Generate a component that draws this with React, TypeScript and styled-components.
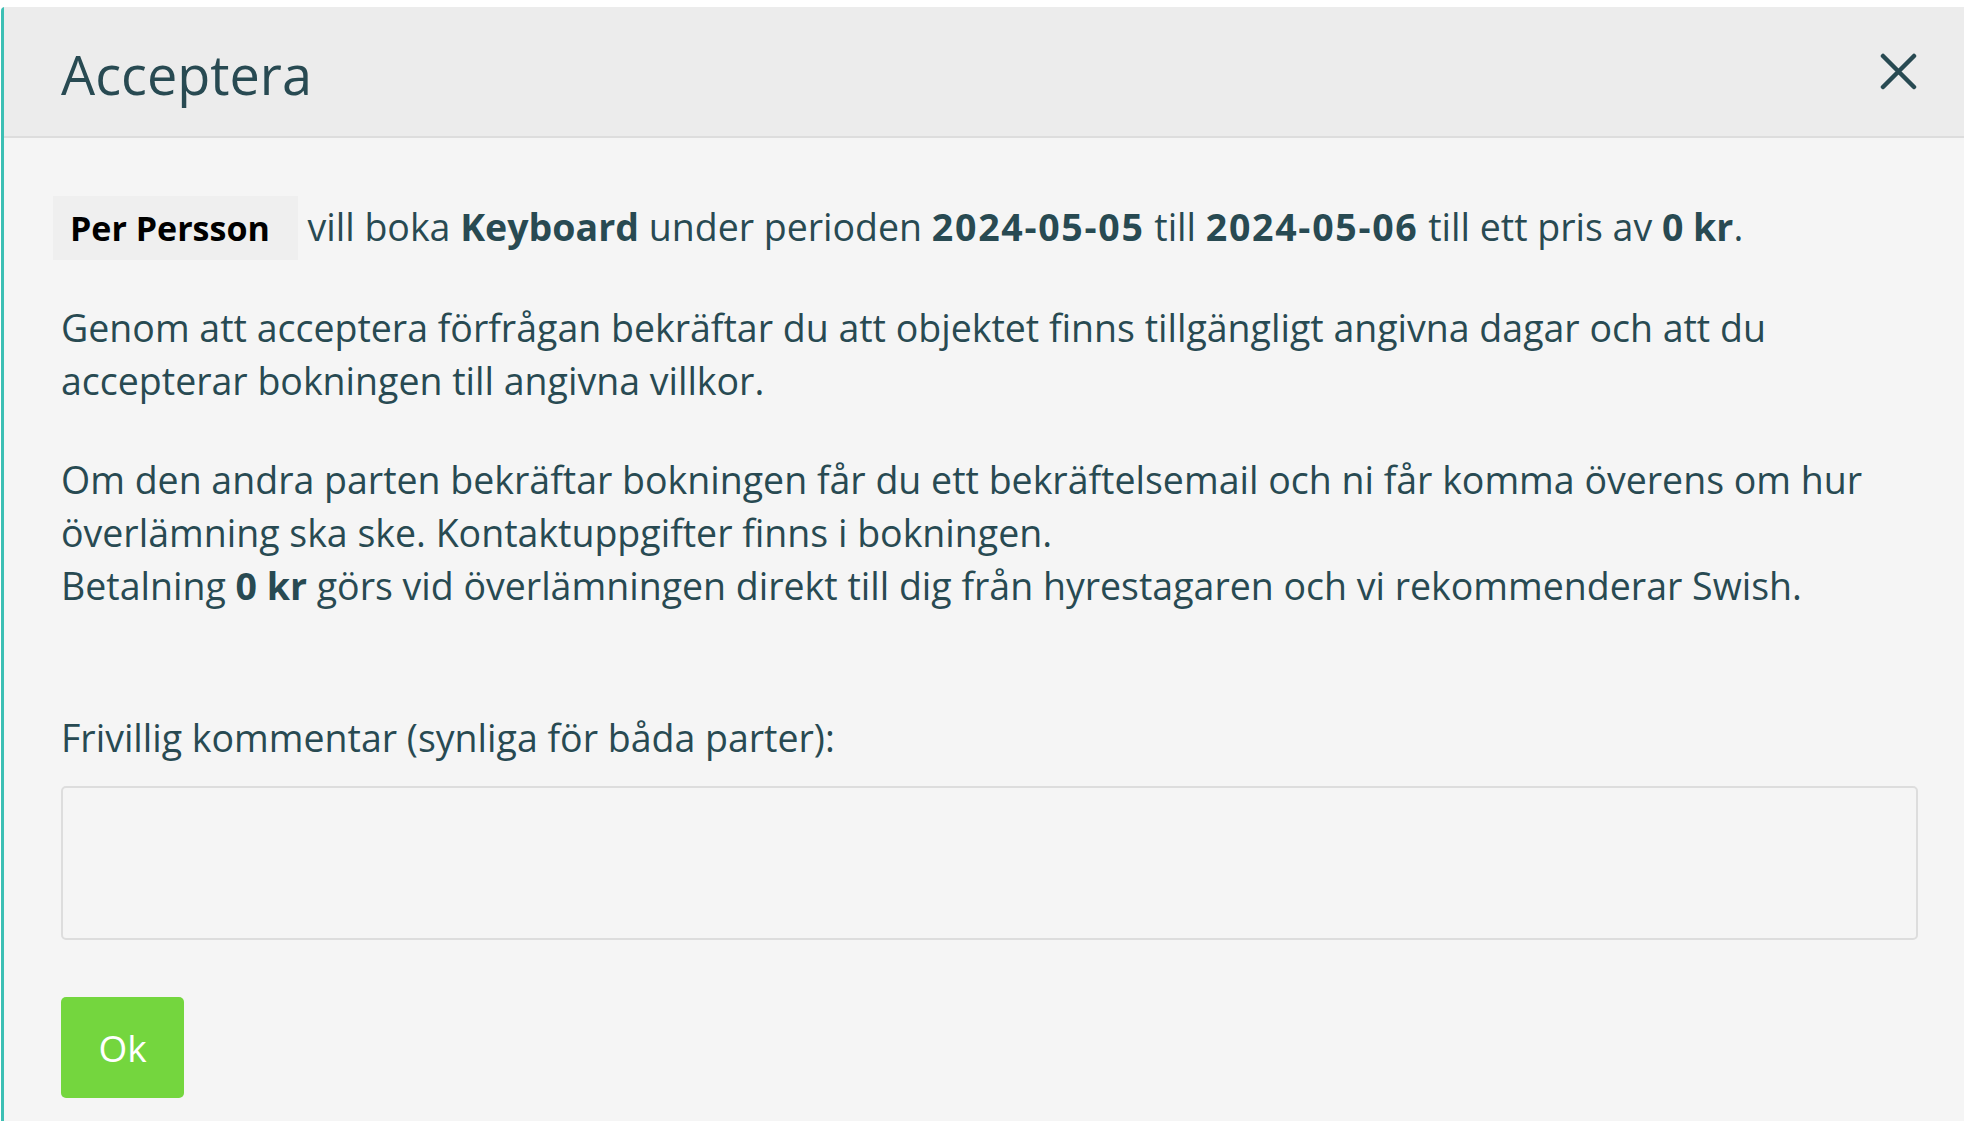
import styled, { createGlobalStyle } from 'styled-components';

const GlobalStyle = createGlobalStyle`
  html, body {
    margin: 0;
    padding: 0;
    background: #ffffff;
  }
  body {
    font-family: "Open Sans", "Noto Sans", sans-serif;
    color: #284a52;
  }
`;

const Page = styled.div`
  padding-top: 7px;
  padding-left: 1px;
  min-height: 1121px;
  box-sizing: border-box;
  display: flex;
`;

const Modal = styled.div`
  flex: 1;
  display: flex;
  flex-direction: column;
  background: #f5f5f5;
  border-left: 3px solid #3cbfb4;
  border-top-left-radius: 4px;
`;

const Header = styled.div`
  display: flex;
  align-items: center;
  justify-content: space-between;
  height: 129px;
  padding: 0 46px 0 57px;
  background: #ececec;
  border-bottom: 2px solid #dddddd;
`;

const Title = styled.h4`
  margin: 0;
  padding-top: 4px;
  font-size: 54px;
  font-weight: 400;
  color: #284a52;
`;

const CloseButton = styled.button`
  border: 0;
  background: transparent;
  padding: 0;
  width: 40px;
  height: 40px;
  display: flex;
  align-items: center;
  justify-content: center;
  cursor: pointer;
  color: #284a52;
`;

const Body = styled.div`
  padding: 62px 46px 0 57px;
  font-size: 37.5px;
  line-height: 53px;
`;

const Paragraph = styled.p<{ $gap?: number }>`
  margin: 0 0 ${(p) => p.$gap ?? 46}px 0;
`;

const Strong = styled.b<{ $date?: boolean }>`
  font-weight: 700;
  letter-spacing: ${(p) => (p.$date ? '1.7px' : 'normal')};
`;

const UserChip = styled.span`
  margin-left: -8px;
  padding: 9px 28px 9px 17px;
  background: #efefef;
  color: #000000;
  font-weight: 700;
  font-size: 34px;
`;

const Label = styled.label`
  display: block;
  margin-bottom: 22px;
`;

const Comment = styled.textarea`
  display: block;
  box-sizing: border-box;
  width: 100%;
  height: 154px;
  border: 2px solid #dddddd;
  border-radius: 5px;
  background: #f5f5f5;
  resize: none;
  font: inherit;
`;

const OkButton = styled.button`
  margin-top: 57px;
  width: 123px;
  height: 101px;
  border: 0;
  border-radius: 5px;
  background: #74d63e;
  color: #ffffff;
  font-family: "Open Sans", "Noto Sans", sans-serif;
  font-size: 37px;
  cursor: pointer;
`;

export default function App() {
  return (
    <>
      <GlobalStyle />
      <Page>
        <Modal>
          <Header>
            <Title>Acceptera</Title>
            <CloseButton aria-label="Stäng">
              <svg width="37" height="37" viewBox="0 0 37 37">
                <path
                  d="M3 3 L34 34 M34 3 L3 34"
                  stroke="currentColor"
                  strokeWidth="4.5"
                  strokeLinecap="round"
                />
              </svg>
            </CloseButton>
          </Header>
          <Body>
            <Paragraph>
              <UserChip>Per Persson</UserChip> vill boka <Strong>Keyboard</Strong>{' '}
              under perioden <Strong $date>2024-05-05</Strong> till{' '}
              <Strong $date>2024-05-06</Strong> till ett pris av{' '}
              <Strong>0 kr</Strong>.
            </Paragraph>
            <Paragraph>
              Genom att acceptera förfrågan bekräftar du att objektet finns
              tillgängligt angivna dagar och att du accepterar bokningen till
              angivna villkor.
            </Paragraph>
            <Paragraph $gap={99}>
              Om den andra parten bekräftar bokningen får du ett bekräftelsemail
              och ni får komma överens om hur överlämning ska ske.
              Kontaktuppgifter finns i bokningen.
              <br />
              Betalning <Strong>0 kr</Strong> görs vid överlämningen direkt till
              dig från hyrestagaren och vi rekommenderar Swish.
            </Paragraph>
            <Label htmlFor="comment">
              Frivillig kommentar (synliga för båda parter):
            </Label>
            <Comment id="comment" />
            <OkButton>Ok</OkButton>
          </Body>
        </Modal>
      </Page>
    </>
  );
}
